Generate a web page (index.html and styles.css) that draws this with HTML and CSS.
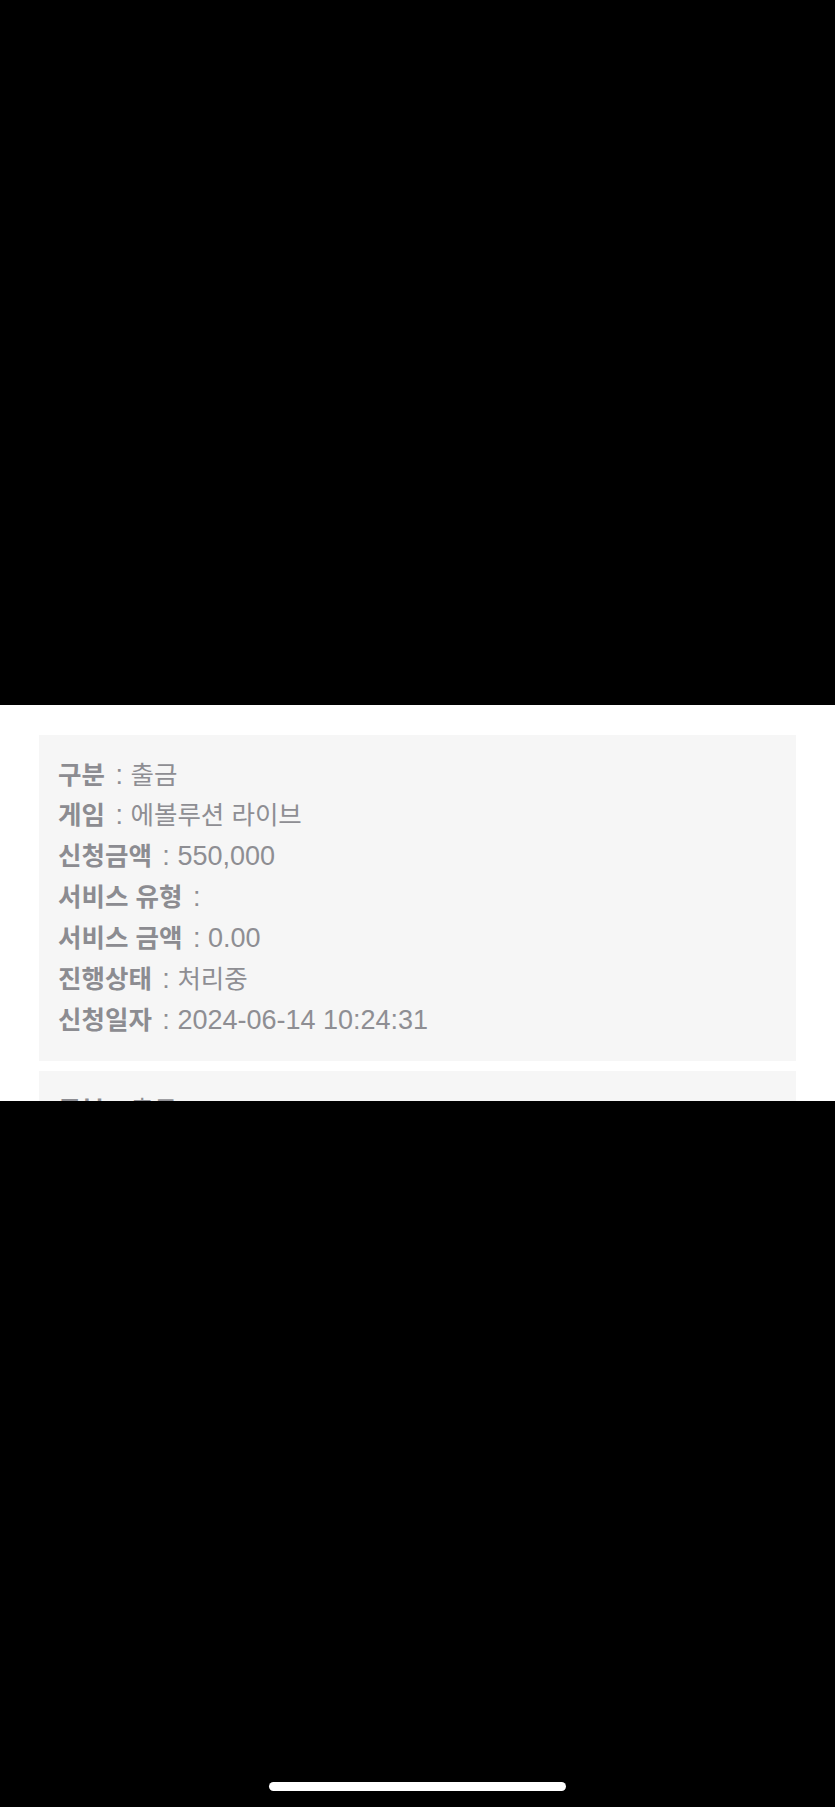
FILE: index.html
```html
<!DOCTYPE html>
<html lang="ko">
<head>
<meta charset="utf-8">
<meta name="viewport" content="width=device-width, initial-scale=1">
<title>신청내역</title>
<link rel="stylesheet" href="styles.css">
</head>
<body>
<div class="backdrop-top"></div>
<div class="sheet">
  <div class="card">
    <div class="row"><b class="ko label">구분</b> <span class="sep">:</span> <span class="ko">출금</span></div>
    <div class="row"><b class="ko label">게임</b> <span class="sep">:</span> <span class="ko">에볼루션 라이브</span></div>
    <div class="row"><b class="ko label">신청금액</b> <span class="sep">:</span> <span class="num">550,000</span></div>
    <div class="row"><b class="ko label">서비스 유형</b> <span class="sep">:</span></div>
    <div class="row"><b class="ko label">서비스 금액</b> <span class="sep">:</span> <span class="num">0.00</span></div>
    <div class="row"><b class="ko label">진행상태</b> <span class="sep">:</span> <span class="ko">처리중</span></div>
    <div class="row"><b class="ko label">신청일자</b> <span class="sep">:</span> <span class="num">2024-06-14 10:24:31</span></div>
  </div>
  <div class="card">
    <div class="row"><b class="ko label">구분</b> <span class="sep">:</span> <span class="ko">출금</span></div>
    <div class="row"><b class="ko label">게임</b> <span class="sep">:</span> <span class="ko">에볼루션 라이브</span></div>
    <div class="row"><b class="ko label">신청금액</b> <span class="sep">:</span> <span class="num">550,000</span></div>
  </div>
</div>
<div class="backdrop-bottom">
  <div class="home-indicator"></div>
</div>
</body>
</html>
```
FILE: styles.css
```css
html, body {
  margin: 0;
  padding: 0;
  background: #000;
}

body {
  display: flex;
  flex-direction: column;
  height: 1807px;
  overflow: hidden;
  font-family: "Liberation Sans", "Noto Sans CJK KR", sans-serif;
}

.backdrop-top {
  height: 705px;
  flex: none;
  background: #000;
}

.sheet {
  height: 396px;
  flex: none;
  background: #fff;
  padding: 30px 39px 0;
  box-sizing: border-box;
  overflow: hidden;
  display: flex;
  flex-direction: column;
  gap: 10px;
}

.card {
  flex: none;
  background: #f6f6f6;
  padding: 17.5px 20px 22px 19px;
  display: flex;
  flex-direction: column;
}

.row {
  height: 40.9px;
  line-height: 40.9px;
  white-space: nowrap;
  font-size: 27px;
  color: #8e8e93;
}

.ko {
  font-family: "Noto Sans CJK KR", sans-serif;
  font-size: 25.5px;
  letter-spacing: 0;
}

.label {
  font-weight: 700;
  color: #8c8c91;
}

.sep,
.num {
  font-family: "Liberation Sans", sans-serif;
}

.sep {
  margin-left: 3px;
}

.backdrop-bottom {
  flex: 1;
  background: #000;
  display: flex;
  justify-content: center;
  align-items: flex-end;
  padding-bottom: 16px;
}

.home-indicator {
  width: 297px;
  height: 9px;
  border-radius: 5px;
  background: #fff;
}
```
